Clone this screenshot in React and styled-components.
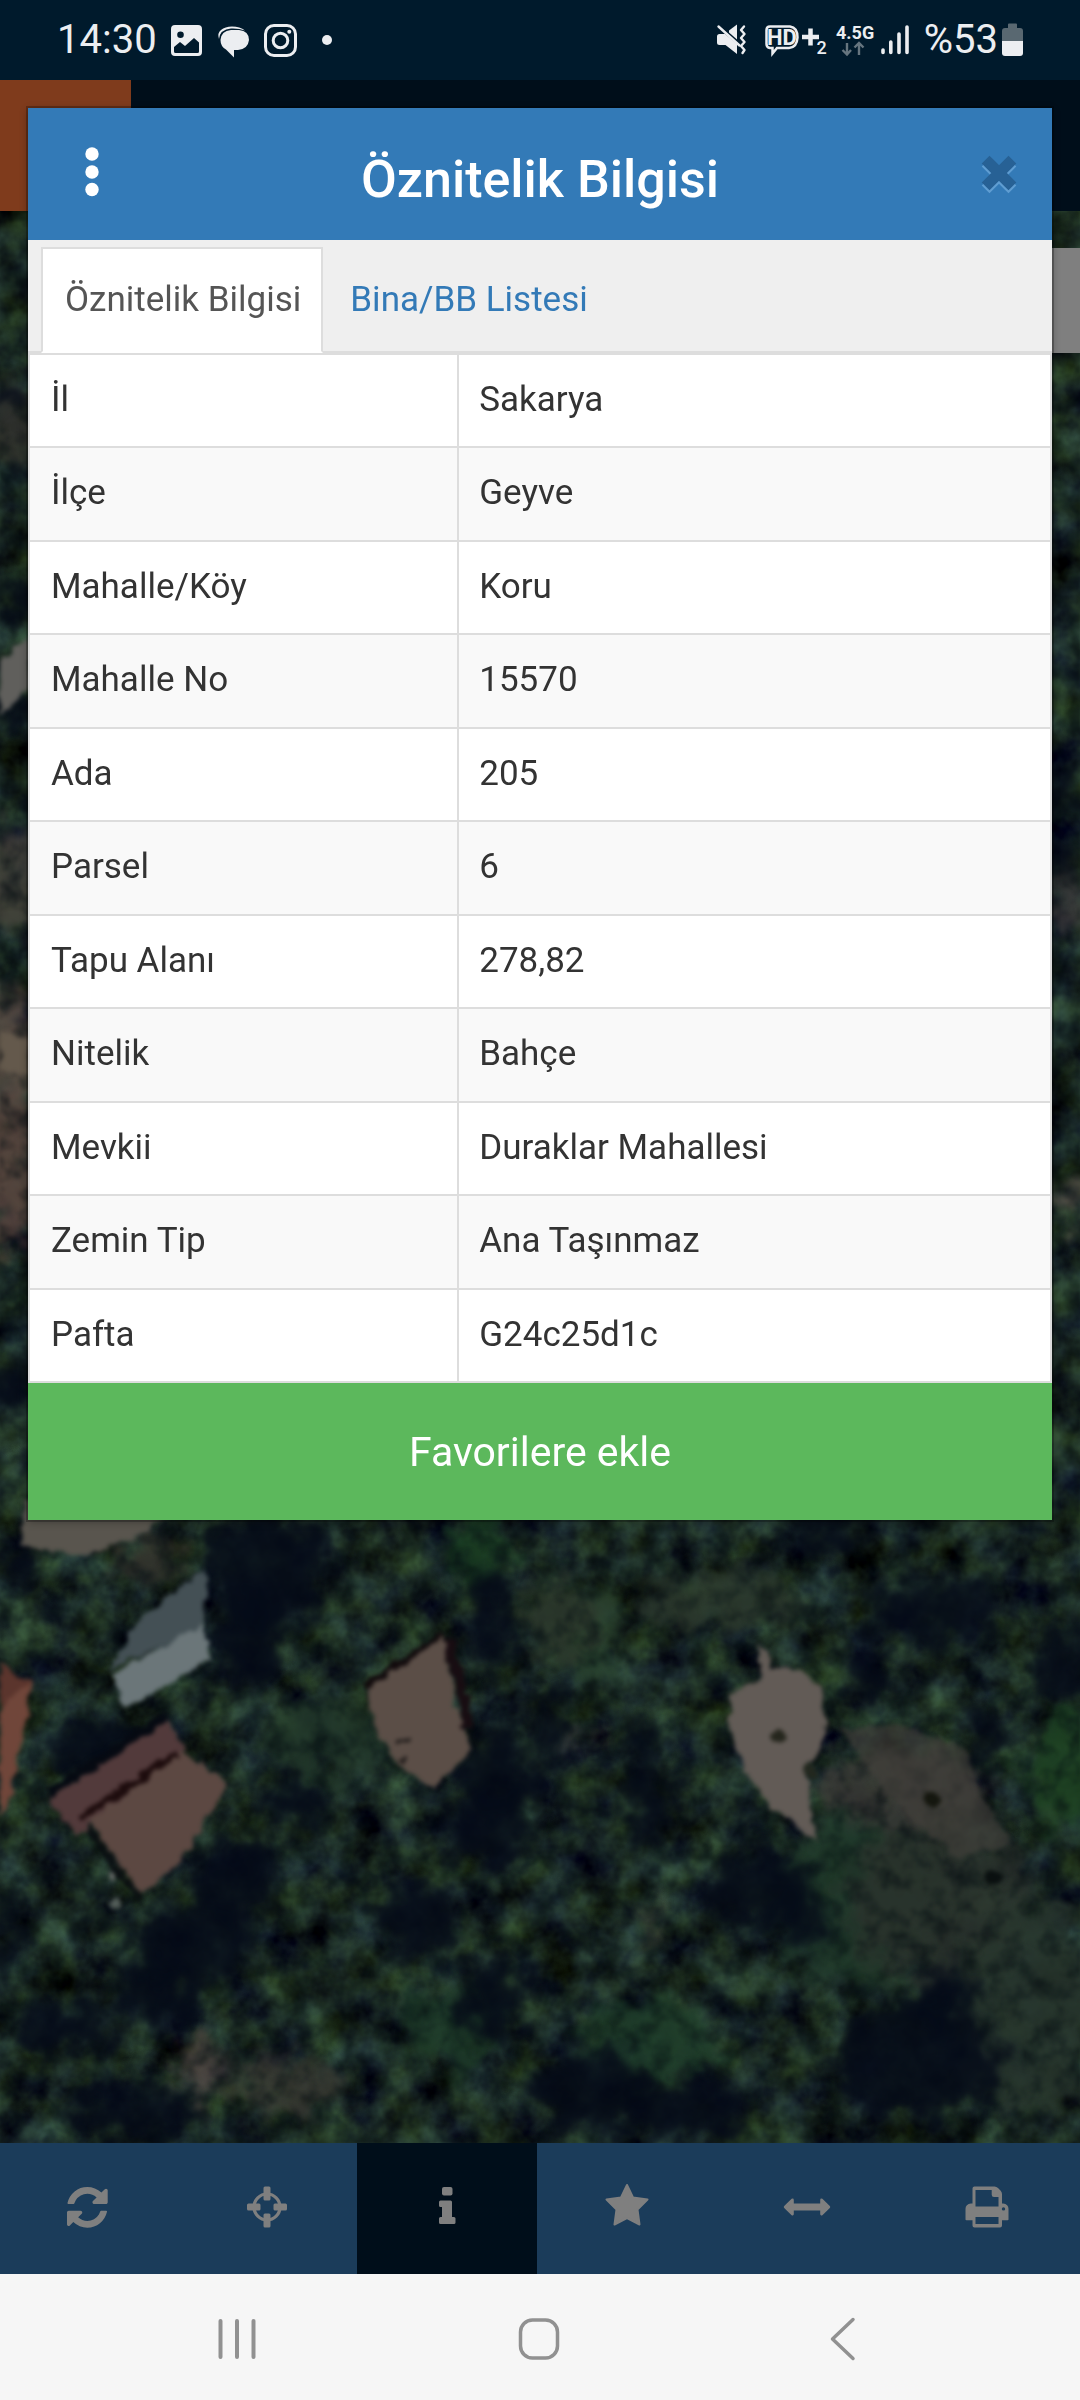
import React, {useState} from 'react';
import styled, {createGlobalStyle, css} from 'styled-components';

const GlobalStyle = createGlobalStyle`
  * {
    box-sizing: border-box;
  }
  body {
    margin: 0;
    font-family: Roboto, "Liberation Sans", sans-serif;
    color: #333;
  }
  svg {
    display: block;
  }
  button {
    font-family: inherit;
    border: 0;
    padding: 0;
    background: none;
    cursor: pointer;
  }
`
const Page = styled.div`
  position: relative;
  display: grid;
  grid-template-rows: 80px 131px 1fr 131px 126px;
  min-height: 100vh;
  background: #000e1a;
`
const StatusBar = styled.div`
  display: flex;
  align-items: center;
  justify-content: space-between;
  padding: 0 57px;
  background: #001a2c;
  color: #eceef1;
`
const StatusGroup = styled.div`
  display: flex;
  align-items: center;
  gap: ${props => props.$gap}px;
`
const StatusText = styled.span`
  font-size: 40px;
  line-height: 44px;
`
const AppBar = styled.div`
  background: #000e1a;
`
const MenuTile = styled.div`
  width: 131px;
  height: 100%;
  background: #7f3b1c;
`
const MapArea = styled.div`
  position: relative;
  overflow: hidden;
  background: #1a2c26;
`
const MapImage = styled.svg`
  position: absolute;
  inset: 0;
  width: 100%;
  height: 100%;
`
const MapSearch = styled.div`
  position: absolute;
  top: 37px;
  right: 0;
  width: 60px;
  height: 105px;
  background: #7f7f7f;
`
const Toolbar = styled.nav`
  display: grid;
  grid-template-columns: repeat(6, 1fr);
  background: #1b3c5a;
  overflow: hidden;
`
const ToolButton = styled.button`
  display: flex;
  align-items: center;
  justify-content: center;
  margin: 0 3px 0 -3px;
  padding-bottom: 4px;
  color: #7f7f7f;
  ${props => props.$active && css`
    background: #000e1a;
  `}
`
const NavBar = styled.div`
  display: grid;
  grid-template-columns: repeat(3, 1fr);
  padding: 4px 86px 0;
  background: #f6f6f6;
`
const NavButton = styled.button`
  display: flex;
  align-items: center;
  justify-content: center;
  color: #919191;
`
const Modal = styled.section`
  position: absolute;
  top: 108px;
  left: 28px;
  right: 28px;
  background: #fff;
  box-shadow: 0 0 0 2px rgba(0, 0, 0, 0.25), 0 2px 8px rgba(0, 0, 0, 0.3);
`
const ModalHeader = styled.header`
  display: grid;
  grid-template-columns: 128px 1fr 128px;
  align-items: center;
  height: 132px;
  background: #337ab7;
`
const MenuButton = styled.button`
  justify-self: center;
`
const CloseButton = styled.button`
  justify-self: end;
  padding-right: 33px;
`
const Title = styled.h1`
  margin: 0;
  padding-top: 12px;
  color: #fff;
  font-size: 52px;
  font-weight: 500;
  line-height: 60px;
  text-align: center;
`
const Tabs = styled.div`
  display: flex;
  gap: 3px;
  padding: 7px 13px 0;
  background: #efefef;
  border-bottom: 2px solid #ddd;
`
const Tab = styled.a`
  height: 106px;
  margin-bottom: -2px;
  padding: 0 20px 0 22px;
  border: 2px solid transparent;
  color: #337ab7;
  font-size: 35px;
  line-height: 102px;
  text-decoration: none;
  ${props => props.$active && css`
    color: #555;
    background: #fff;
    border-color: #ddd;
    border-bottom-color: #fff;
  `}
`
const Table = styled.table`
  width: 100%;
  border-collapse: collapse;
  table-layout: fixed;
`
const Row = styled.tr`
  height: 93px;
  &:nth-child(even) {
    height: 94px;
    background: #f9f9f9;
  }
`
const cell = css`
  padding: 0 21px 2px;
  border: 2px solid #ddd;
  font-size: 35px;
  font-weight: 400;
  line-height: 50px;
  text-align: left;
`
const Name = styled.th`
  ${cell}
  width: 42%;
`
const Value = styled.td`
  ${cell}
  padding-left: 20px;
`
const FavoriteButton = styled.button`
  display: block;
  width: 100%;
  height: 137px;
  background: #5cb85c;
  color: #fff;
  font-size: 41px;
`

const attributes = [
  ['İl', 'Sakarya'],
  ['İlçe', 'Geyve'],
  ['Mahalle/Köy', 'Koru'],
  ['Mahalle No', '15570'],
  ['Ada', '205'],
  ['Parsel', '6'],
  ['Tapu Alanı', '278,82'],
  ['Nitelik', 'Bahçe'],
  ['Mevkii', 'Duraklar Mahallesi'],
  ['Zemin Tip', 'Ana Taşınmaz'],
  ['Pafta', 'G24c25d1c'],
];

// cx, cy, rx, ry of the tree shadows
const shadows = [
  [268, 1570, 62, 60], [250, 1640, 34, 50], [95, 1745, 50, 24], [296, 1803, 36, 30],
  [235, 1880, 42, 48], [190, 1945, 62, 46], [150, 1995, 44, 34], [496, 1772, 40, 48],
  [490, 1830, 46, 40], [551, 1730, 16, 44], [490, 1620, 22, 60], [758, 1890, 58, 38],
  [800, 1918, 28, 24], [916, 2060, 84, 62], [940, 2000, 30, 34], [130, 2112, 72, 26],
  [496, 1997, 34, 44], [826, 1535, 42, 24], [930, 1610, 70, 34], [870, 1680, 22, 26],
  [592, 2092, 60, 42], [1060, 1660, 26, 40], [60, 2030, 50, 26], [985, 1735, 16, 34],
  [10, 400, 24, 14], [20, 600, 26, 16], [14, 705, 24, 18], [8, 1385, 24, 24],
  [1060, 790, 20, 22], [1066, 860, 18, 18], [640, 1740, 26, 14], [650, 1800, 26, 40],
  [690, 2110, 60, 34], [420, 1920, 40, 40], [20, 1560, 24, 20], [5, 1940, 12, 50],
];

// cx, cy, rx, ry, colour of grass and soil
const ground = [
  [1066, 1770, 38, 60, '#1e4423'], [592, 1638, 26, 56, '#2c4630'], [478, 1552, 30, 40, '#1b3f25'],
  [860, 1900, 84, 90, '#203a2a'], [940, 1900, 90, 90, '#2a332d'], [1030, 2010, 70, 110, '#28362e'],
  [330, 1740, 70, 40, '#22382a'], [650, 2040, 70, 40, '#20402b'], [720, 1600, 80, 30, '#2b382d'],
  [900, 1790, 90, 38, '#3a3a36'], [285, 2085, 58, 26, '#3a3b34'], [200, 2070, 20, 34, '#544b46'],
  [560, 1620, 40, 40, '#2b372c'], [150, 1560, 36, 24, '#33312c'], [650, 1930, 6, 20, '#5c5c49'],
  [575, 1738, 16, 8, '#5c5a55'], [14, 420, 30, 40, '#34352f'], [14, 880, 30, 50, '#44423c'],
  [10, 1050, 28, 60, '#5b4d44'], [10, 1170, 28, 80, '#5a463f'], [1066, 900, 18, 36, '#3c3b3b'],
  [1068, 1200, 20, 18, '#5a554b'], [450, 2030, 50, 40, '#1d3b28'],
];

function SatelliteMap() {
  return (
    <MapImage viewBox="0 211 1080 1932" preserveAspectRatio="xMidYMax slice" aria-hidden="true">
      <defs>
        <filter id="trees" x="0" y="0" width="100%" height="100%" colorInterpolationFilters="sRGB">
          <feTurbulence type="fractalNoise" baseFrequency="0.026" numOctaves="4" seed="8" />
          <feColorMatrix values="0.3 0.06 0 0 -0.075  0.46 0.08 0 0 -0.105  0.28 0 0.16 0 -0.08  0 0 0 0 1" />
        </filter>
        <filter id="leaves" x="0" y="0" width="100%" height="100%" colorInterpolationFilters="sRGB">
          <feTurbulence type="fractalNoise" baseFrequency="0.045" numOctaves="3" seed="21" />
          <feColorMatrix values="0 0 0 0 0.01  0 0 0 0 0.04  0 0 0 0 0.06  2.4 0 0 0 -1.05" />
          <feGaussianBlur stdDeviation="1" />
        </filter>
        <filter id="soft" x="-10%" y="-10%" width="120%" height="120%" colorInterpolationFilters="sRGB">
          <feGaussianBlur in="SourceGraphic" stdDeviation="9" result="blurred" />
          <feTurbulence type="fractalNoise" baseFrequency="0.04" numOctaves="3" seed="4" result="noise" />
          <feDisplacementMap in="blurred" in2="noise" scale="60" xChannelSelector="R" yChannelSelector="G" result="ragged" />
          <feGaussianBlur in="ragged" stdDeviation="2" />
        </filter>
        <filter id="roof" x="-10%" y="-10%" width="120%" height="120%" colorInterpolationFilters="sRGB">
          <feTurbulence type="fractalNoise" baseFrequency="0.08" numOctaves="2" seed="6" result="noise" />
          <feDisplacementMap in="SourceGraphic" in2="noise" scale="12" xChannelSelector="R" yChannelSelector="G" />
          <feGaussianBlur stdDeviation="2" />
        </filter>
      </defs>
      <rect y="211" width="1080" height="1932" filter="url(#trees)" />
      <g filter="url(#soft)">
        {ground.map(([cx, cy, rx, ry, fill], i) => (
          <ellipse key={i} cx={cx} cy={cy} rx={rx} ry={ry} fill={fill} opacity="0.85" />
        ))}
      </g>
      <rect y="211" width="1080" height="1932" filter="url(#leaves)" opacity="0.6" />
      <g filter="url(#soft)">
        {shadows.map(([cx, cy, rx, ry], i) => (
          <ellipse key={i} cx={cx} cy={cy} rx={rx} ry={ry} fill="#050a18" opacity="0.85" />
        ))}
      </g>
      <g filter="url(#roof)">
        <path d="M0 660 30 635V690L0 715Z" fill="#605f5c" />
        <path d="M0 1030 30 1040V1075L0 1070Z" fill="#64594c" />
        <path d="M24 1500H190L140 1535 86 1556 21 1546Z" fill="#59554e" />
        <path d="M0 1664 31 1682 22 1745 7 1807 0 1815Z" fill="#70463a" />
        <path d="M0 1664 31 1682 0 1705Z" fill="#5b352d" />
        <path d="M109 1670 140 1618 205 1568V1626Z" fill="#445055" />
        <path d="M112 1674 203 1624 209 1660 124 1711Z" fill="#6b7679" />
        <path d="M45 1790 165 1712 169 1720 50 1798Z" fill="#060a12" />
        <path d="M50 1798 169 1720 185 1748 76 1836Z" fill="#523a3b" />
        <path d="M90 1821 183 1749 227 1786 182 1861 141 1896Z" fill="#5c4842" />
        <path d="M81 1818 179 1752" stroke="#1d0c0d" strokeWidth="7" />
        <path d="M88 1828 139 1900" stroke="#0b0f12" strokeWidth="5" />
        <path d="M365 1686 444 1634" stroke="#120b0d" strokeWidth="7" />
        <path d="M367 1689 444 1637 456 1707 472 1749 434 1788 399 1765 375 1728Z" fill="#5b4e47" />
        <path d="M448 1640 462 1690 468 1730" stroke="#180d12" strokeWidth="10" fill="none" />
        <path d="M395 1745 410 1740M400 1762 407 1756" stroke="#1a1716" strokeWidth="5" />
        <path d="M758 1640 772 1668 800 1668 820 1686 826 1732 806 1774 816 1840 771 1807 745 1770 728 1732 733 1690 762 1678Z" fill="#625b56" />
        <path d="M840 1730 900 1725 964 1749 985 1800 1012 1844 957 1857 900 1810Z" fill="#45413c" opacity="0.6" />
        <circle cx="778" cy="1736" r="8" fill="#25261d" />
        <circle cx="812" cy="1772" r="7" fill="#23281f" />
        <circle cx="931" cy="1800" r="8" fill="#15170f" />
        <circle cx="993" cy="1876" r="9" fill="#0a1010" />
        <circle cx="112" cy="1876" r="4" fill="#6a6c6a" />
        <circle cx="116" cy="1905" r="5" fill="#535d59" />
      </g>
    </MapImage>
  )
}

function RefreshIcon() {
  return (
    <svg width="48" height="48" viewBox="0 0 48 48" fill="currentColor" aria-hidden="true">
      <g transform="translate(4 4) scale(0.0265)">
        <path d="M1511 928q0 5-1 7-64 268-268 434.500t-478 166.500q-146 0-282.500-55t-243.500-157l-129 129q-19 19-45 19t-45-19-19-45v-448q0-26 19-45t45-19h448q26 0 45 19t19 45-19 45l-137 137q71 66 161 102t187 36q134 0 250-65t186-179q11-17 53-117 8-23 30-23h192q13 0 22.500 9.500t9.500 22.500zM1536 128v448q0 26-19 45t-45 19h-448q-26 0-45-19t-19-45 19-45l138-138q-148-137-349-137-134 0-250 65t-186 179q-11 17-53 117-8 23-30 23h-199q-13 0-22.500-9.500t-9.500-22.500v-7q65-268 270-434.500t480-166.500q146 0 284 55.500t245 156.500l130-129q19-19 45-19t45 19 19 45z" />
      </g>
    </svg>
  )
}

function CrosshairIcon() {
  return (
    <svg width="48" height="48" viewBox="0 0 48 48" fill="currentColor" aria-hidden="true">
      <circle cx="24" cy="24" r="13" fill="none" stroke="currentColor" strokeWidth="3.200" />
      <rect x="20.500" y="3.500" width="7" height="14" rx="1.500" />
      <rect x="20.500" y="30.500" width="7" height="14" rx="1.500" />
      <rect x="4" y="20.500" width="13.500" height="7" rx="1.500" />
      <rect x="30.500" y="20.500" width="13.500" height="7" rx="1.500" />
    </svg>
  )
}

function InfoIcon() {
  return (
    <svg width="48" height="48" viewBox="0 0 48 48" fill="currentColor" aria-hidden="true">
      <rect x="19" y="4" width="10.500" height="8.500" rx="2" />
      <path d="M17.500 17.500H27.500Q29 17.500 29 19V34H31Q32.500 34 32.500 35.500V39.500Q32.500 41 31 41H17.500Q16 41 16 39.500V35.500Q16 34 17.500 34H19V24H17.500Q16 24 16 22.500V19Q16 17.500 17.500 17.500Z" />
    </svg>
  )
}

function StarIcon() {
  return (
    <svg width="48" height="48" viewBox="0 0 48 48" fill="currentColor" stroke="currentColor" strokeWidth="2" strokeLinejoin="round" aria-hidden="true">
      <path d="M24 2 30 14.500 44.500 16.500 34.500 26.500 36.500 41.500 24 35 11.500 41.500 13.500 26.500 3.500 16.500 18 14.500Z" />
    </svg>
  )
}

function ArrowsIcon() {
  return (
    <svg width="48" height="48" viewBox="0 0 48 48" fill="currentColor" aria-hidden="true">
      <path d="M1.200 23 8.600 15.800Q10.800 15 10.800 17V20.500H37.200V17Q37.200 15 39.400 15.800L46.800 23Q47.800 24 46.800 25L39.400 32.200Q37.200 33 37.200 31V27.500H10.800V31Q10.800 33 8.600 32.200L1.200 25Q0.200 24 1.200 23Z" />
    </svg>
  )
}

function PrintIcon() {
  return (
    <svg width="48" height="48" viewBox="0 0 48 48" fill="currentColor" aria-hidden="true">
      <path fillRule="evenodd" d="M11.500 3.500H31.500Q33.500 3.500 35 5L37.500 7.500Q39 9 39 11V20.500H40Q45.500 21 45.500 26V36.500Q45.500 37.300 44.500 37.300H39V42.500Q39 44.500 37 44.500H11.500Q9.500 44.500 9.500 42.500V37.300H3.500Q2.500 37.300 2.500 36.500V26Q2.500 21 8 20.500H9.500V5.500Q9.500 3.500 11.500 3.500ZM12.500 7V23.500H35.500V14H31Q28.700 14 28.700 11.700V7ZM12.500 34V41H35.500V34ZM40.500 24.200A1.700 1.700 0 1 0 40.500 27.600 1.700 1.700 0 1 0 40.500 24.200Z" />
    </svg>
  )
}

const tools = [
  ['Yenile', RefreshIcon],
  ['Konum', CrosshairIcon],
  ['Bilgi', InfoIcon],
  ['Favoriler', StarIcon],
  ['Ölçüm', ArrowsIcon],
  ['Yazdır', PrintIcon],
];

function StatusIconsLeft() {
  return (
    <svg width="162" height="40" viewBox="170 20 162 40" fill="currentColor" aria-hidden="true">
      <path fillRule="evenodd" d="M174 25H197Q201 25 201 29V52Q201 56 197 56H174Q170 56 170 52V29Q170 25 174 25ZM179.500 31.500A3.300 3.300 0 1 0 179.500 38.100 3.300 3.300 0 1 0 179.500 31.500ZM173 47V51.500Q173 53 174.500 53H196.500Q198 53 198 51.500V42.500L193 38 184 46 179 42Z" />
      <path d="M218 39Q216 33 220 30Q224 26.500 231 26.500Q239 26.500 244 30.500Q238 28.300 230 28.600Q219 29.500 218 39Z" />
      <path d="M230 30H238Q248 31 248 40Q247 49 237 50H233V57.500L225 49.500Q219.500 46.500 219.500 40Q220 31 230 30Z" />
      <rect x="264.500" y="25.500" width="30" height="30" rx="8.500" fill="none" stroke="currentColor" strokeWidth="3" />
      <circle cx="279.500" cy="40.500" r="7.300" fill="none" stroke="currentColor" strokeWidth="3" />
      <circle cx="288.300" cy="31.800" r="2" />
      <circle cx="326" cy="40" r="5" />
    </svg>
  )
}

function StatusIconsRight() {
  return (
    <svg width="205" height="40" viewBox="715 20 205 40" fill="currentColor" aria-hidden="true">
      <path d="M717 36.500Q717 34 719.500 34H725L737 44V54L725.500 45H719.500Q717 45 717 42.500Z" />
      <path d="M729 30.500 737 24.500V39.500L729 32.500Z" />
      <path d="M718.500 26.500 739.500 45.500" stroke="currentColor" strokeWidth="2.400" strokeLinecap="round" />
      <path d="M744 26.500 741 30 744.500 34 741 38 744.500 42 741 46 744.500 50 742.500 53" fill="none" stroke="currentColor" strokeWidth="2.400" strokeLinecap="round" strokeLinejoin="round" />
      <path d="M770 26.500H790Q797.500 27.500 797.500 37.500Q797 47.500 789 48H777L772.500 53.500V48H770Q766.500 47.500 766.500 44V30Q766.500 26.500 770 26.500Z" fill="none" stroke="currentColor" strokeWidth="2.500" />
      <text x="767" y="45" fontSize="22" fontWeight="700">HD</text>
      <path d="M802 37H819M810.500 28.500V45.500" stroke="currentColor" strokeWidth="4.500" />
      <text x="816.500" y="54" fontSize="18" fontWeight="500">2</text>
      <text x="836" y="39" fontSize="18" fontWeight="700">4.5G</text>
      <path d="M847 43V54M842.500 50 847 54.500 851 50M859 55V44M854.500 47.500 859 43 863.500 47.500" fill="none" stroke="#66757f" strokeWidth="2.400" />
      <path d="M883 50V52.500M890.800 42V52.500M899 34V52.500M907 27V52.500" stroke="currentColor" strokeWidth="3.600" strokeLinecap="round" />
    </svg>
  )
}

function Battery() {
  return (
    <svg width="21" height="40" viewBox="0 0 21 40" fill="currentColor" aria-hidden="true">
      <path d="M6 4.500Q6 3.500 7 3.500H14Q15 3.500 15 4.500V8H18Q21 8 21 11V21H0V11Q0 8 3 8H6Z" fill="#596871" />
      <path d="M0 21H21V33Q21 36 18 36H3Q0 36 0 33Z" />
    </svg>
  )
}

function AttributeModal() {
  const [tab, setTab] = useState(0);
  const select = index => event => {
    event.preventDefault();
    setTab(index);
  };
  return (
    <Modal>
      <ModalHeader>
        <MenuButton aria-label="Menü">
          <svg width="16" height="54" viewBox="0 0 16 54" fill="#fff" aria-hidden="true">
            <circle cx="8" cy="7" r="6.700" />
            <circle cx="8" cy="25" r="6.700" />
            <circle cx="8" cy="42.500" r="6.700" />
          </svg>
        </MenuButton>
        <Title>Öznitelik Bilgisi</Title>
        <CloseButton aria-label="Kapat">
          <svg width="40" height="40" viewBox="0 0 40 40" strokeWidth="11" strokeLinecap="square" aria-hidden="true">
            <path d="M10.500 12.500 29.500 31.500M29.500 12.500 10.500 31.500" stroke="#5f9dd2" />
            <path d="M10.500 9.500 29.500 28.500M29.500 9.500 10.500 28.500" stroke="#276195" />
          </svg>
        </CloseButton>
      </ModalHeader>
      <Tabs>
        <Tab href="#bilgi" $active={tab === 0} onClick={select(0)}>Öznitelik Bilgisi</Tab>
        <Tab href="#liste" $active={tab === 1} onClick={select(1)}>Bina/BB Listesi</Tab>
      </Tabs>
      <Table>
        <tbody>
          {attributes.map(([name, value]) => (
            <Row key={name}>
              <Name scope="row">{name}</Name>
              <Value>{value}</Value>
            </Row>
          ))}
        </tbody>
      </Table>
      <FavoriteButton>Favorilere ekle</FavoriteButton>
    </Modal>
  )
}

function App() {
  return (
    <Page>
      <GlobalStyle />
      <StatusBar>
        <StatusGroup $gap={14}>
          <StatusText>14:30</StatusText>
          <StatusIconsLeft />
        </StatusGroup>
        <StatusGroup $gap={4}>
          <StatusIconsRight />
          <StatusText>%53</StatusText>
          <Battery />
        </StatusGroup>
      </StatusBar>
      <AppBar>
        <MenuTile />
      </AppBar>
      <MapArea>
        <SatelliteMap />
        <MapSearch />
      </MapArea>
      <Toolbar>
        {tools.map(([label, Icon]) => (
          <ToolButton key={label} aria-label={label} $active={label === 'Bilgi'}>
            <Icon />
          </ToolButton>
        ))}
      </Toolbar>
      <NavBar>
        <NavButton aria-label="Son uygulamalar">
          <svg width="48" height="48" viewBox="0 0 48 48" fill="none" stroke="currentColor" strokeWidth="4" strokeLinecap="round" aria-hidden="true">
            <path d="M7.500 6V42M24 6V42M40.500 6V42" />
          </svg>
        </NavButton>
        <NavButton aria-label="Ana ekran">
          <svg width="48" height="48" viewBox="0 0 48 48" fill="none" stroke="currentColor" strokeWidth="3.500" aria-hidden="true">
            <rect x="4.500" y="5" width="37" height="38" rx="12" />
          </svg>
        </NavButton>
        <NavButton aria-label="Geri">
          <svg width="48" height="48" viewBox="0 0 48 48" fill="none" stroke="currentColor" strokeWidth="3.500" strokeLinecap="round" strokeLinejoin="round" aria-hidden="true">
            <path d="M34 4.500 13.500 24 34 43.500" />
          </svg>
        </NavButton>
      </NavBar>
      <AttributeModal />
    </Page>
  )
}

export default App;
